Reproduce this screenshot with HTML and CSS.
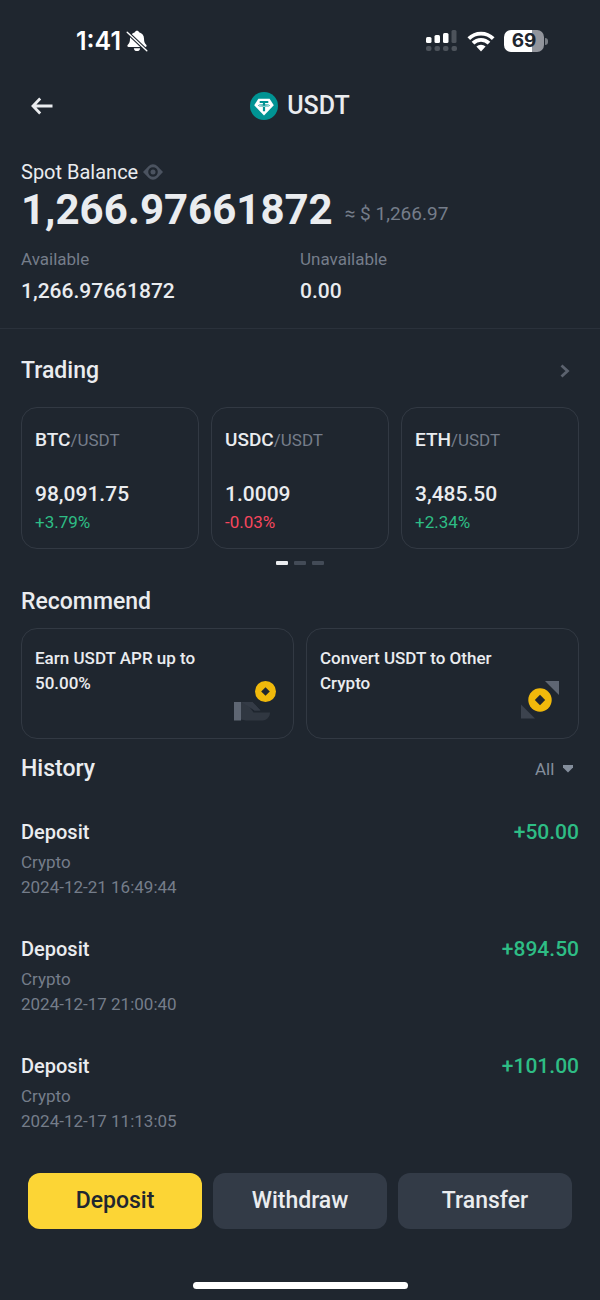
FILE: index.html
```html
<!DOCTYPE html>
<html lang="en">
<head>
<meta charset="utf-8">
<meta name="viewport" content="width=device-width, initial-scale=1">
<title>USDT</title>
<link rel="stylesheet" href="styles.css">
</head>
<body>
<div class="status">
  <div class="status-left">
    <span class="clock">1:41</span>
    <svg class="bell" viewBox="0 0 22 22" aria-hidden="true">
      <path fill="#fff" d="M11 0.800c1.100 0 1.900.6 2.100 1.500 3 .8 4.900 3.200 4.900 6.300 0 3.800.9 5 2.200 6.200.9.9.4 2.200-.9 2.200H2.700c-1.300 0-1.800-1.300-.9-2.200C3.100 13.600 4 12.400 4 8.600c0-3.100 1.900-5.500 4.900-6.300.2-.9 1-1.500 2.100-1.500zM7.800 18.200h6.400c-.2 1.900-1.500 2.900-3.200 2.900s-3-1-3.200-2.900z"/>
      <path stroke="#1f262f" stroke-width="3.600" d="M1 2l20 19"/>
      <path stroke="#fff" stroke-width="1.400" stroke-linecap="round" d="M1.200 2.200l19.600 18.600"/>
    </svg>
  </div>
  <div class="status-right">
    <svg class="signal" viewBox="0 0 32 22" aria-hidden="true">
      <g fill="#fff"><rect x="0" y="7" width="5.500" height="6" rx="1.500"/><rect x="8.500" y="5" width="5.500" height="8" rx="1.500"/><rect x="17" y="3" width="5.500" height="10" rx="1.500"/></g>
      <g fill="#4d535b"><rect x="25.500" y="0" width="5" height="13" rx="1.500"/><rect x="0" y="16" width="5.500" height="5" rx="2"/><rect x="8.500" y="16" width="5.500" height="5" rx="2"/><rect x="17" y="16" width="5.500" height="5" rx="2"/><rect x="25.500" y="16" width="5.500" height="5" rx="2"/></g>
    </svg>
    <svg class="wifi" viewBox="0 0 28 21" aria-hidden="true">
      <g fill="none" stroke="#fff" stroke-width="3.800"><path d="M1.800 7.600a17.300 17.300 0 0 1 24.400 0"/><path d="M6 12.200a11.300 11.300 0 0 1 16 0"/></g>
      <path fill="#fff" d="M9.400 15.600a6.500 6.500 0 0 1 9.200 0L14 20.400z"/>
    </svg>
    <div class="battery"><span class="battery-level">69</span><span class="battery-tip"></span></div>
  </div>
</div>

<header class="header">
  <button class="back" type="button" aria-label="Back">
    <svg viewBox="0 0 22 18" aria-hidden="true"><path fill="none" stroke="#eaecef" stroke-width="2.800" d="M21.500 9H2M9.200 1.500L2 9l7.200 7.500"/></svg>
  </button>
  <h1 class="title">
    <svg viewBox="0 0 28 28" aria-hidden="true">
      <circle cx="14" cy="14" r="14" fill="#009393"/>
      <path fill="#fff" d="M8.400 6.800h11.200l4.200 6.400L14 23.400 4.200 13.200z"/>
      <path fill="#009393" d="M9.700 9h8.600v2h-3.200v1.100c2.700.1 4.700.7 4.700 1.400s-2 1.300-4.700 1.400v4.300h-2.200v-4.300c-2.700-.1-4.700-.7-4.700-1.400s2-1.300 4.700-1.400V11H9.700z"/>
      <path fill="none" stroke="#fff" stroke-width=".7" d="M12.900 12.900c-2.200.1-3.700.4-3.700.7 0 .4 2.200.7 4.800.7s4.800-.3 4.800-.7c0-.3-1.500-.6-3.700-.7"/>
    </svg>
    USDT
  </h1>
</header>

<main>
  <section class="balance">
    <div class="balance-label">Spot Balance
      <button class="eye" type="button" aria-label="Hide balance"><svg viewBox="0 0 20 16" aria-hidden="true"><path fill="#4b5360" fill-rule="evenodd" d="M0 8l5.500-5.800a6.200 6.200 0 0 1 9 0L20 8l-5.500 5.800a6.200 6.200 0 0 1-9 0zM10 3.200a4.800 4.800 0 1 0 0 9.600 4.800 4.800 0 0 0 0-9.600z"/><circle cx="10" cy="8" r="2.500" fill="#4b5360"/></svg></button>
    </div>
    <div class="total"><span class="total-amount">1,266.97661872</span><span class="total-fiat">≈ $ 1,266.97</span></div>
    <dl class="split">
      <div><dt>Available</dt><dd>1,266.97661872</dd></div>
      <div><dt>Unavailable</dt><dd>0.00</dd></div>
    </dl>
  </section>

  <section class="section trading">
    <div class="section-head">
      <h2>Trading</h2>
      <button class="more" type="button" aria-label="More trading pairs"><svg viewBox="0 0 10 14" aria-hidden="true"><path fill="none" stroke="#5b626e" stroke-width="2.800" d="M1.500 1.500L7.500 7l-6 5.500"/></svg></button>
    </div>
    <div class="pairs">
      <a class="card pair" href="#btc"><span class="pair-name">BTC<small>/USDT</small></span><span class="price">98,091.75</span><span class="change up">+3.79%</span></a>
      <a class="card pair" href="#usdc"><span class="pair-name">USDC<small>/USDT</small></span><span class="price">1.0009</span><span class="change down">-0.03%</span></a>
      <a class="card pair" href="#eth"><span class="pair-name">ETH<small>/USDT</small></span><span class="price">3,485.50</span><span class="change up">+2.34%</span></a>
    </div>
    <div class="pager"><span class="on"></span><span></span><span></span></div>
  </section>

  <section class="section recommend">
    <h2>Recommend</h2>
    <div class="offers">
      <a class="card offer" href="#earn"><span>Earn USDT APR up to 50.00%</span>
        <svg viewBox="0 0 42 42" aria-hidden="true">
          <path fill="#303741" d="M7 22h11.500l8 8.500h-6l-5-3.500 4 5.500H36c0 4-3 8-7.500 8H12l-5-1z"/>
          <path fill="#343b46" d="M7 22h11.500l8 8.500h-6l-5-3.500"/>
          <path fill="#5e6673" d="M0 22h7v18.500H0z"/>
          <circle cx="31.500" cy="11.500" r="10.500" fill="#f0b90b"/><path fill="#1f262f" d="M31.500 7.200l4.300 4.300-4.300 4.300-4.300-4.300z"/>
        </svg></a>
      <a class="card offer" href="#convert"><span>Convert USDT to Other Crypto</span>
        <svg viewBox="0 0 42 42" aria-hidden="true">
          <path fill="#5e6673" d="M26 1h14v14z"/><path fill="#3c434e" d="M2 24.500v14h14z"/>
          <circle cx="21" cy="20" r="14" fill="#1f262f"/>
          <circle cx="21" cy="20" r="11.700" fill="#f0b90b"/><path fill="#1f262f" d="M21 14.800l5.200 5.200-5.200 5.200-5.200-5.200z"/>
        </svg></a>
    </div>
  </section>

  <section class="section history">
    <div class="section-head">
      <h2>History</h2>
      <label class="filter"><select aria-label="Filter history"><option>All</option></select><svg viewBox="0 0 10 8" aria-hidden="true"><path fill="#848e9c" d="M0 0h10v2.500L5 7.500 0 2.500z"/></svg></label>
    </div>
    <ul class="entries">
      <li><div><h3>Deposit</h3><p>Crypto</p><time>2024-12-21 16:49:44</time></div><span class="amount">+50.00</span></li>
      <li><div><h3>Deposit</h3><p>Crypto</p><time>2024-12-17 21:00:40</time></div><span class="amount">+894.50</span></li>
      <li><div><h3>Deposit</h3><p>Crypto</p><time>2024-12-17 11:13:05</time></div><span class="amount">+101.00</span></li>
    </ul>
  </section>
</main>

<footer class="footer">
  <div class="actions">
    <button class="primary" type="button">Deposit</button>
    <button type="button">Withdraw</button>
    <button type="button">Transfer</button>
  </div>
  <div class="home"></div>
</footer>
</body>
</html>
```

FILE: styles.css
```css
* { box-sizing: border-box; margin: 0; padding: 0; }
body {
  background: #1f262f;
  color: #eaecef;
  font-family: Roboto, "Liberation Sans", sans-serif;
  font-size: 17px;
  line-height: 24px;
}
svg { display: block; flex: none; }
button { border: 0; background: none; color: inherit; font: inherit; cursor: pointer; }
a { color: inherit; text-decoration: none; }
ul { list-style: none; }

.status { display: flex; justify-content: space-between; align-items: center; height: 82px; padding: 0 52px 0 76px; }
.status-left { display: flex; align-items: center; gap: 5px; }
.clock { color: #fff; font: 600 25px/28px Inter, sans-serif; }
.bell { width: 22px; height: 22px; }
.status-right { display: flex; align-items: center; gap: 9px; }
.signal { width: 32px; height: 22px; }
.wifi { width: 28px; height: 21px; }
.battery { display: flex; align-items: center; gap: 1px; }
.battery-level {
  width: 40px;
  border-radius: 7px;
  background: linear-gradient(90deg, #fff 69%, #92959c 69%);
  color: #1f262f;
  font: 700 19px/22px Inter, sans-serif;
  text-align: center;
}
.battery-tip { width: 3px; height: 7px; border-radius: 0 3px 3px 0; background: #777c83; }

.header { display: grid; grid-template-columns: 1fr auto 1fr; align-items: center; height: 48px; padding: 0 31px; }
.back { justify-self: start; }
.back svg { width: 22px; height: 18px; }
.title { display: flex; align-items: center; gap: 9px; font-size: 25px; font-weight: 500; line-height: 32px; }
.title svg { width: 28px; height: 28px; }

.balance { padding: 30px 21px 25px; border-bottom: 1px solid #2a313b; }
.balance-label { display: flex; align-items: center; gap: 5px; font-size: 20px; }
.eye svg { width: 20px; height: 16px; }
.total { display: flex; align-items: flex-end; gap: 12px; }
.total-amount { font-size: 42px; font-weight: 700; line-height: 52px; }
.total-fiat { color: #757d8a; font-size: 19px; line-height: 44px; }
.split { display: grid; grid-template-columns: 1fr 1fr; margin-top: 11px; }
.split dt { color: #757d8a; }
.split dd { margin-top: 8px; font-size: 21px; font-weight: 500; }

.section { padding: 0 21px; }
h2 { font-size: 23px; font-weight: 500; line-height: 32px; }
.section-head { display: flex; align-items: center; justify-content: space-between; }
.trading { padding-top: 26px; }
.more { padding: 0 9px; }
.more svg { width: 10px; height: 14px; }
.card { border: 1px solid #323943; border-radius: 16px; }
.pairs { display: grid; grid-template-columns: repeat(3, 1fr); gap: 12px; margin-top: 20px; }
.pair { display: flex; flex-direction: column; padding: 20px 13px 14px; }
.pair-name { font-size: 19px; font-weight: 500; }
.pair-name small { color: #757d8a; font-size: 17px; font-weight: 400; }
.price { margin-top: 28px; font-size: 21px; font-weight: 500; line-height: 28px; }
.change { margin-top: 2px; }
.up { color: #2ebd85; }
.down { color: #f6465d; }
.pager { display: flex; justify-content: center; gap: 6px; margin-top: 12px; }
.pager span { width: 12px; height: 4px; border-radius: 1px; background: #434b57; }
.pager .on { background: #eaecef; }

.recommend { padding-top: 21px; }
.offers { display: grid; grid-template-columns: 1fr 1fr; gap: 12px; margin-top: 10px; }
.offer { display: flex; justify-content: space-between; min-height: 111px; padding: 17px 17px 16px 13px; font-weight: 500; line-height: 25px; }
.offer svg { align-self: flex-end; width: 42px; height: 42px; }

.history { padding-top: 14px; }
.filter { display: flex; align-items: center; gap: 8px; padding-right: 6px; }
.filter select { appearance: none; border: 0; background: none; color: #848e9c; font: inherit; }
.filter svg { width: 10px; height: 8px; }
.entries { display: flex; flex-direction: column; gap: 35px; margin-top: 33px; }
.entries li { display: flex; justify-content: space-between; }
.entries h3 { margin-bottom: 4px; font-size: 20px; font-weight: 500; line-height: 28px; }
.entries p, .entries time { display: block; color: #757d8a; line-height: 25px; }
.amount { color: #2ebd85; font-size: 21px; font-weight: 500; line-height: 28px; }

.footer { padding: 39px 28px 11px; }
.actions { display: grid; grid-template-columns: repeat(3, 1fr); gap: 11px; }
.actions button { height: 56px; border-radius: 12px; background: #333b47; font-size: 23px; font-weight: 500; }
.actions .primary { background: #fcd535; color: #202630; }
.home { width: 215px; height: 7px; margin: 53px auto 0; border-radius: 4px; background: #fff; }
```
